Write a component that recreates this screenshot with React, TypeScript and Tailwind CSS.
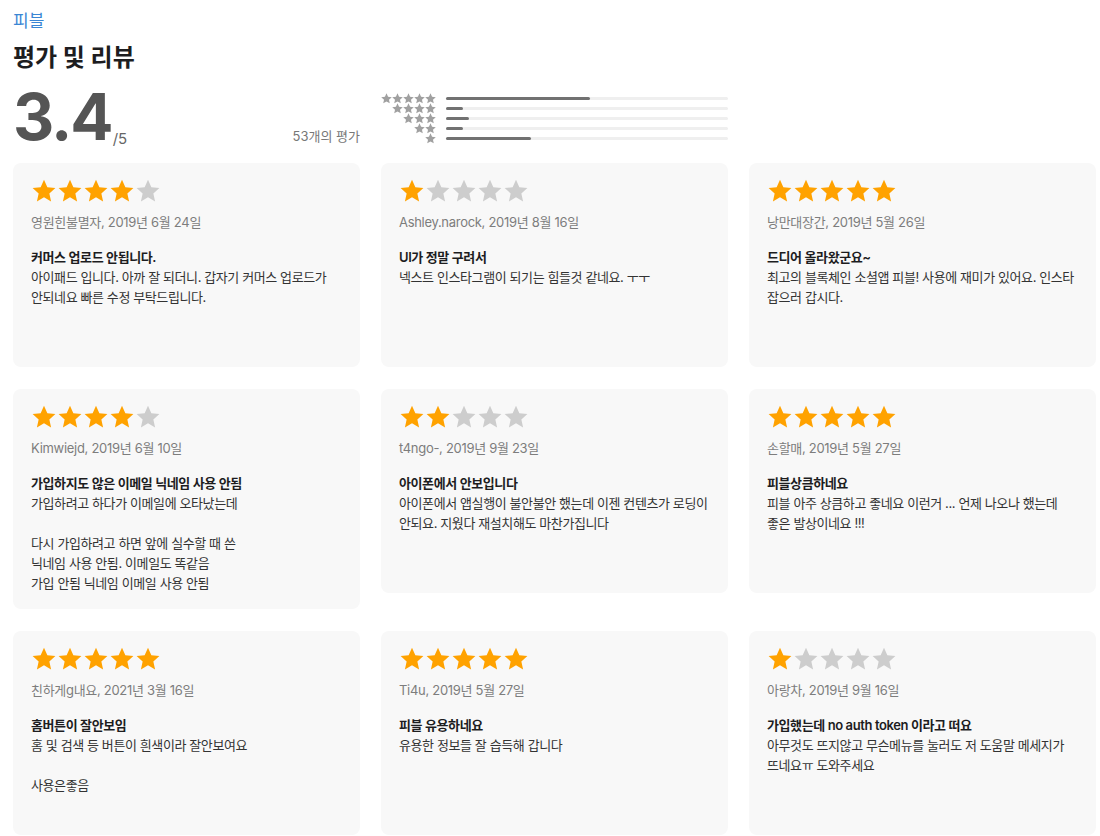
import React from "react";

const FONT = 'Inter, "Noto Sans CJK KR", sans-serif';

type Review = {
  rating: number;
  author: string;
  date: string;
  title: string;
  body: string;
};

const reviews: Review[] = [
  {
    rating: 4,
    author: "영원힌불멸자",
    date: "2019년 6월 24일",
    title: "커머스 업로드 안됩니다.",
    body: "아이패드 입니다. 아까 잘 되더니. 갑자기 커머스 업로드가\n안되네요 빠른 수정 부탁드립니다.",
  },
  {
    rating: 1,
    author: "Ashley.narock",
    date: "2019년 8월 16일",
    title: "UI가 정말 구려서",
    body: "넥스트 인스타그램이 되기는 힘들것 같네요. ㅜㅜ",
  },
  {
    rating: 5,
    author: "낭만대장간",
    date: "2019년 5월 26일",
    title: "드디어 올라왔군요~",
    body: "최고의 블록체인 소셜앱 피블! 사용에 재미가 있어요. 인스타\n잡으러 갑시다.",
  },
  {
    rating: 4,
    author: "Kimwiejd",
    date: "2019년 6월 10일",
    title: "가입하지도 않은 이메일 닉네임 사용 안됨",
    body: "가입하려고 하다가 이메일에 오타났는데\n\n다시 가입하려고 하면 앞에 실수할 때 쓴\n닉네임 사용 안됨. 이메일도 똑같음\n가입 안됨 닉네임 이메일 사용 안됨",
  },
  {
    rating: 2,
    author: "t4ngo-",
    date: "2019년 9월 23일",
    title: "아이폰에서 안보입니다",
    body: "아이폰에서 앱실행이 불안불안 했는데 이젠 컨텐츠가 로딩이\n안되요. 지웠다 재설치해도 마찬가집니다",
  },
  {
    rating: 5,
    author: "손할매",
    date: "2019년 5월 27일",
    title: "피블상큼하네요",
    body: "피블 아주 상큼하고 좋네요 이런거 ... 언제 나오나 했는데\n좋은 발상이네요 !!!",
  },
  {
    rating: 5,
    author: "친하게g내요",
    date: "2021년 3월 16일",
    title: "홈버튼이 잘안보임",
    body: "홈 및 검색 등 버튼이 흰색이라 잘안보여요\n\n사용은좋음",
  },
  {
    rating: 5,
    author: "Ti4u",
    date: "2019년 5월 27일",
    title: "피블 유용하네요",
    body: "유용한 정보들 잘 습득해 갑니다",
  },
  {
    rating: 1,
    author: "아랑차",
    date: "2019년 9월 16일",
    title: "가입했는데 no auth token 이라고 떠요",
    body: "아무것도 뜨지않고 무슨메뉴를 눌러도 저 도움말 메세지가\n뜨네요ㅠ 도와주세요",
  },
];

// share of each star count, 5 down to 1
const histogram = [51, 6, 8, 6, 30];

const STAR_PATH =
  "M12 1.6l3.1 6.9 7.4.75-5.55 5 1.6 7.35L12 17.8l-6.55 3.8 1.6-7.35L1.5 9.25l7.4-.75z";

function Star({ filled, size }: { filled: boolean; size: number }) {
  return (
    <svg width={size} height={size} viewBox="0 0 24 24">
      <path d={STAR_PATH} fill={filled ? "#ffa200" : "#cdcdcd"} />
    </svg>
  );
}

function SmallStar() {
  return (
    <svg width="11" height="11" viewBox="1 1 22 22">
      <path d={STAR_PATH} fill="#a0a0a0" />
    </svg>
  );
}

function ReviewCard({ review }: { review: Review }) {
  return (
    <div className="min-h-[204px] rounded-lg bg-[#f8f8f8] px-[18px] pt-[15px] pb-4">
      <div className="flex h-[26px] items-center">
        {[1, 2, 3, 4, 5].map((n) => (
          <Star key={n} filled={n <= review.rating} size={26} />
        ))}
      </div>
      <div className="mt-2 text-[13px] leading-5 tracking-[-0.3px] text-[#7d7d7d]">
        {review.author}, {review.date}
      </div>
      <div className="mt-[15px] text-[13px] leading-5 font-semibold tracking-[-0.4px] text-[#1d1d1f]">
        {review.title}
      </div>
      <p className="whitespace-pre-line break-keep text-[13px] leading-5 tracking-[-0.4px] text-[#333]">
        {review.body}
      </p>
    </div>
  );
}

export default function App() {
  return (
    <div className="min-h-screen bg-white pl-[13px] pt-[8px]" style={{ fontFamily: FONT }}>
      <a className="block text-[17px] leading-[26px] text-[#3a86d4]">피블</a>
      <h1 className="mt-[8px] text-[24px] leading-[32px] font-bold text-[#1d1d1f]">평가 및 리뷰</h1>

      <div className="grid grid-cols-[347px_347px] gap-x-[21px] mt-[4px] h-[70px]">
        <div className="flex items-end justify-between">
          <div className="flex items-end">
            <span className="text-[64px] leading-[62px] font-bold tracking-[-2px] text-[#555]">3.4</span>
            <span className="ml-[1px] mb-[-1px] text-[15px] leading-5 text-[#666]">/5</span>
          </div>
          <span className="mb-[2px] text-[13px] leading-5 text-[#777]">53개의 평가</span>
        </div>

        <div className="flex flex-col pt-[15px]">
          {histogram.map((pct, i) => (
            <div key={i} className="flex h-[10px] items-center">
              <div className="flex w-[55px] justify-end">
                {Array.from({ length: 5 - i }).map((_, j) => (
                  <SmallStar key={j} />
                ))}
              </div>
              <div className="ml-[10px] h-[3px] flex-1 rounded-full bg-[#efefef]">
                <div className="h-[3px] rounded-full bg-[#717171]" style={{ width: `${pct}%` }} />
              </div>
            </div>
          ))}
        </div>
      </div>

      <div className="mt-[15px] grid grid-cols-[347px_347px_347px] items-start gap-x-[21px] gap-y-[22px]">
        {reviews.map((r, i) => (
          <ReviewCard key={i} review={r} />
        ))}
      </div>
    </div>
  );
}
